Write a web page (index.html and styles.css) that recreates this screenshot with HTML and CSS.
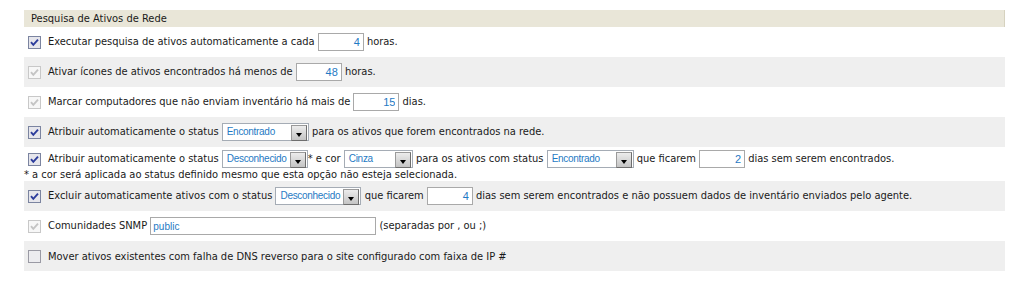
FILE: index.html
```html
<!DOCTYPE html>
<html>
	<head>
		<title>Pesquisa de Ativos de Rede</title>
		<link rel="stylesheet" href="styles.css">
	</head>
	<body>
		<div class="panel">
			<div class="panel-head">Pesquisa de Ativos de Rede</div>

			<div class="row">
				<svg class="cb on" width="13" height="13" viewBox="0 0 13 13"><rect x="0.5" y="0.5" width="12" height="12"/><path d="M3 6.2 L5.3 8.8 L10 3.6"/></svg>
				<span class="txt">Executar pesquisa de ativos automaticamente a cada <input class="num" type="text" value="4"> horas.</span>
			</div>
			<div class="row alt">
				<svg class="cb dis" width="13" height="13" viewBox="0 0 13 13"><rect x="0.5" y="0.5" width="12" height="12"/><path d="M3 6.2 L5.3 8.8 L10 3.6"/></svg>
				<span class="txt">Ativar ícones de ativos encontrados há menos de <input class="num" type="text" value="48"> horas.</span>
			</div>
			<div class="row">
				<svg class="cb dis" width="13" height="13" viewBox="0 0 13 13"><rect x="0.5" y="0.5" width="12" height="12"/><path d="M3 6.2 L5.3 8.8 L10 3.6"/></svg>
				<span class="txt">Marcar computadores que não enviam inventário há mais de <input class="num" type="text" value="15"> dias.</span>
			</div>
			<div class="row alt">
				<svg class="cb on" width="13" height="13" viewBox="0 0 13 13"><rect x="0.5" y="0.5" width="12" height="12"/><path d="M3 6.2 L5.3 8.8 L10 3.6"/></svg>
				<span class="txt">Atribuir automaticamente o status <span class="sel w87">Encontrado<i class="arrow"></i></span> para os ativos que forem encontrados na rede.</span>
			</div>
			<div class="row two">
				<div class="line">
					<svg class="cb on" width="13" height="13" viewBox="0 0 13 13"><rect x="0.5" y="0.5" width="12" height="12"/><path d="M3 6.2 L5.3 8.8 L10 3.6"/></svg>
					<span class="txt">Atribuir automaticamente o status <span class="sel w85">Desconhecido<i class="arrow"></i></span>* e cor <span class="sel w69">Cinza<i class="arrow"></i></span> para os ativos com status <span class="sel w87">Encontrado<i class="arrow"></i></span> que ficarem <input class="num" type="text" value="2"> dias sem serem encontrados.</span>
				</div>
				<div class="note">* a cor será aplicada ao status definido mesmo que esta opção não esteja selecionada.</div>
			</div>
			<div class="row alt">
				<svg class="cb on" width="13" height="13" viewBox="0 0 13 13"><rect x="0.5" y="0.5" width="12" height="12"/><path d="M3 6.2 L5.3 8.8 L10 3.6"/></svg>
				<span class="txt">Excluir automaticamente ativos com o status <span class="sel w85">Desconhecido<i class="arrow"></i></span> que ficarem <input class="num" type="text" value="4"> dias sem serem encontrados e não possuem dados de inventário enviados pelo agente.</span>
			</div>
			<div class="row">
				<svg class="cb dis" width="13" height="13" viewBox="0 0 13 13"><rect x="0.5" y="0.5" width="12" height="12"/><path d="M3 6.2 L5.3 8.8 L10 3.6"/></svg>
				<span class="txt">Comunidades SNMP <input class="snmp" type="text" value="public"> (separadas por , ou ;)</span>
			</div>
			<div class="row alt">
				<svg class="cb off" width="13" height="13" viewBox="0 0 13 13"><rect x="0.5" y="0.5" width="12" height="12"/></svg>
				<span class="txt">Mover ativos existentes com falha de DNS reverso para o site configurado com faixa de IP #</span>
			</div>
		</div>
	</body>
</html>
```

FILE: styles.css
```css
body {
	margin: 0;
	padding: 10px 0 0 24px;
	background-color: #fff;
	font-family: "DejaVu Sans Condensed", "DejaVu Sans", Verdana, sans-serif;
	font-stretch: condensed;
	font-size: 11px;
	color: #1a1a1a;
}

.panel {
	width: 981px;
}

.panel-head {
	height: 17px;
	line-height: 17px;
	padding-left: 7px;
	background-color: #e9e6d8;
	border-right: 1px solid #d6d2bf;
}

.row {
	display: flex;
	align-items: center;
	height: 30px;
	padding-left: 4px;
	background-color: #fff;
}

.row.alt {
	background-color: #efefef;
}

.row.two {
	display: block;
	height: 34px;
	padding-top: 3px;
	box-sizing: border-box;
}

.line {
	display: flex;
	align-items: center;
	height: 18px;
}

.note {
	height: 13px;
	line-height: 13px;
	margin-left: -4px;
}

.txt {
	margin-left: 7px;
	white-space: nowrap;
}

/* checkboxes */
.cb {
	flex: none;
	display: block;
}

.cb rect {
	fill: #f3f3f5;
	stroke: #7b84a0;
}

.cb path {
	fill: none;
	stroke-width: 1.9;
}

.cb.on rect {
	fill: #e6e6ec;
}

.cb.on path {
	stroke: #2c3c9c;
}

.cb.dis rect {
	fill: #f7f7f7;
	stroke: #c8c8c8;
}

.cb.dis path {
	stroke: #c4c4c4;
}

.cb.off rect {
	fill: #ececef;
	stroke: #9a9aa4;
}

/* inputs */
input {
	box-sizing: border-box;
	height: 18px;
	margin: 0;
	padding: 0 3px;
	border: 1px solid #a9a9a9;
	background-color: #fff;
	font-family: "Liberation Sans", Arial, sans-serif;
	font-size: 11px;
	color: #1f7ac4;
	vertical-align: middle;
	outline: none;
}

.num {
	width: 46px;
	text-align: right;
}

.snmp {
	width: 226px;
	padding-left: 2px;
	font-size: 10px;
}

.sel {
	position: relative;
	display: inline-block;
	box-sizing: border-box;
	height: 18px;
	line-height: 16px;
	padding-left: 4px;
	border: 1px solid #a5acb5;
	background-color: #fff;
	font-family: "Liberation Sans", Arial, sans-serif;
	font-size: 10px;
	letter-spacing: -0.3px;
	color: #1f7ac4;
	vertical-align: middle;
}

.w87 { width: 87px; }
.w85 { width: 86px; }
.w69 { width: 69px; }

.arrow {
	position: absolute;
	top: 1px;
	right: 1px;
	width: 14px;
	height: 14px;
	border: 1px solid #6e6e6e;
	border-top-color: #9a9a9a;
	border-left-color: #9a9a9a;
	background: linear-gradient(#ececec, #c4c4c4);
}

.arrow::after {
	content: "";
	position: absolute;
	left: 4px;
	bottom: 3px;
	border-left: 3px solid transparent;
	border-right: 3px solid transparent;
	border-top: 4px solid #000;
}
```
